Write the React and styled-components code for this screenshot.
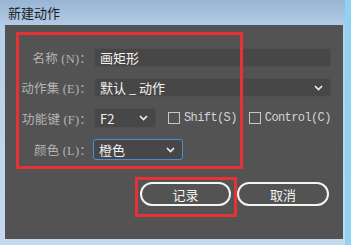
import styled, { createGlobalStyle } from 'styled-components'

const Global = createGlobalStyle`
	html, body {
		margin: 0;
		padding: 0;
		background: #b9d1ea;
	}
	* {
		box-sizing: border-box;
	}
`

const cjk = `"Noto Sans CJK SC", "Noto Sans", sans-serif`

const Window = styled.div`
	width: 351px;
	height: 245px;
	display: flex;
	flex-direction: column;
	background: linear-gradient(180deg, #98b5d4 0%, #b7cfe8 12%, #c4d9ee 100%);
	border-right: 6px solid #8fd3f2;
	overflow: hidden;
`

const TitleBar = styled.div`
	height: 25px;
	display: flex;
	align-items: center;
	padding-left: 8px;
	font-family: ${cjk};
	font-size: 13px;
	color: #1c1c1c;
`

const Panel = styled.div`
	position: relative;
	margin: 0 2px 0 5px;
	height: 214px;
	background: #535353;
	padding: 23px 14px 0 3px;
	display: flex;
	flex-direction: column;
`

const Form = styled.div`
	display: grid;
	grid-template-columns: 84px 1fr;
	column-gap: 2px;
	row-gap: 11px;
	align-items: center;
`

const Label = styled.label`
	text-align: right;
	font-family: "Liberation Serif", ${cjk};
	font-size: 12.5px;
	color: #b4b4b4;
	white-space: nowrap;
	letter-spacing: 0.2px;
`

const Field = styled.div`
	display: flex;
	align-items: center;
	justify-content: space-between;
	width: ${p => p.$w ? `${p.$w}px` : '100%'};
	height: ${p => p.$h || 19}px;
	margin-left: ${p => p.$shift || 0}px;
	padding: 0 7px 0 5px;
	background: #474747;
	border: 1px solid ${p => p.$focus ? '#4a8fd6' : '#4f4f4f'};
	border-radius: 3px;
	font-family: ${cjk};
	font-size: 13px;
	color: #f2f2f2;
`

const Inline = styled.div`
	display: flex;
	align-items: center;
`

const Check = styled.div`
	display: flex;
	align-items: center;
	gap: 4px;
	margin-left: ${p => p.$gap}px;
	font-family: "Liberation Mono", monospace;
	font-size: 12px;
	letter-spacing: -0.6px;
	color: #d4d4d4;
`

const Box = styled.span`
	width: 12px;
	height: 12px;
	border: 1px solid #c8c8c8;
	background: #535353;
`

const Buttons = styled.div`
	display: flex;
	justify-content: flex-end;
	gap: 6px;
	margin-top: 22px;
`

const Button = styled.button`
	width: ${p => p.$w}px;
	height: 24px;
	border: 2px solid #f4f4f4;
	border-radius: 12px;
	background: transparent;
	color: #f2f2f2;
	font-family: ${cjk};
	font-size: 13px;
	padding: 0;
`

const Mark = styled.div`
	position: absolute;
	left: ${p => p.$x}px;
	top: ${p => p.$y}px;
	width: ${p => p.$w}px;
	height: ${p => p.$h}px;
	border: 3px solid #e53235;
	pointer-events: none;
`

function Chevron() {
	return (
		<svg width='9' height='6' viewBox='0 0 9 6'>
			<polyline points='1,1 4.5,4.5 8,1' fill='none' stroke='#f0f0f0' strokeWidth='1.6' />
		</svg>
	)
}

export default function App() {
	return (
		<>
			<Global />
			<Window>
				<TitleBar>新建动作</TitleBar>
				<Panel>
					<Form>
						<Label>名称 (N)：</Label>
						<Field>画矩形</Field>

						<Label>动作集 (E)：</Label>
						<Field>
							默认 _ 动作
							<Chevron />
						</Field>

						<Label>功能键 (F)：</Label>
						<Inline>
							<Field $w={62} $h={20}>
								F2
								<Chevron />
							</Field>
							<Check $gap={12}>
								<Box />
								Shift(S)
							</Check>
							<Check $gap={12}>
								<Box />
								Control(C)
							</Check>
						</Inline>

						<Label>颜色 (L)：</Label>
						<Field $w={90} $h={21} $shift={-1} $focus>
							橙色
							<Chevron />
						</Field>
					</Form>
					<Buttons>
						<Button $w={91}>记录</Button>
						<Button $w={92}>取消</Button>
					</Buttons>
					<Mark $x={11} $y={7} $w={227} $h={137} />
					<Mark $x={130} $y={152} $w={102} $h={40} />
				</Panel>
			</Window>
		</>
	)
}
